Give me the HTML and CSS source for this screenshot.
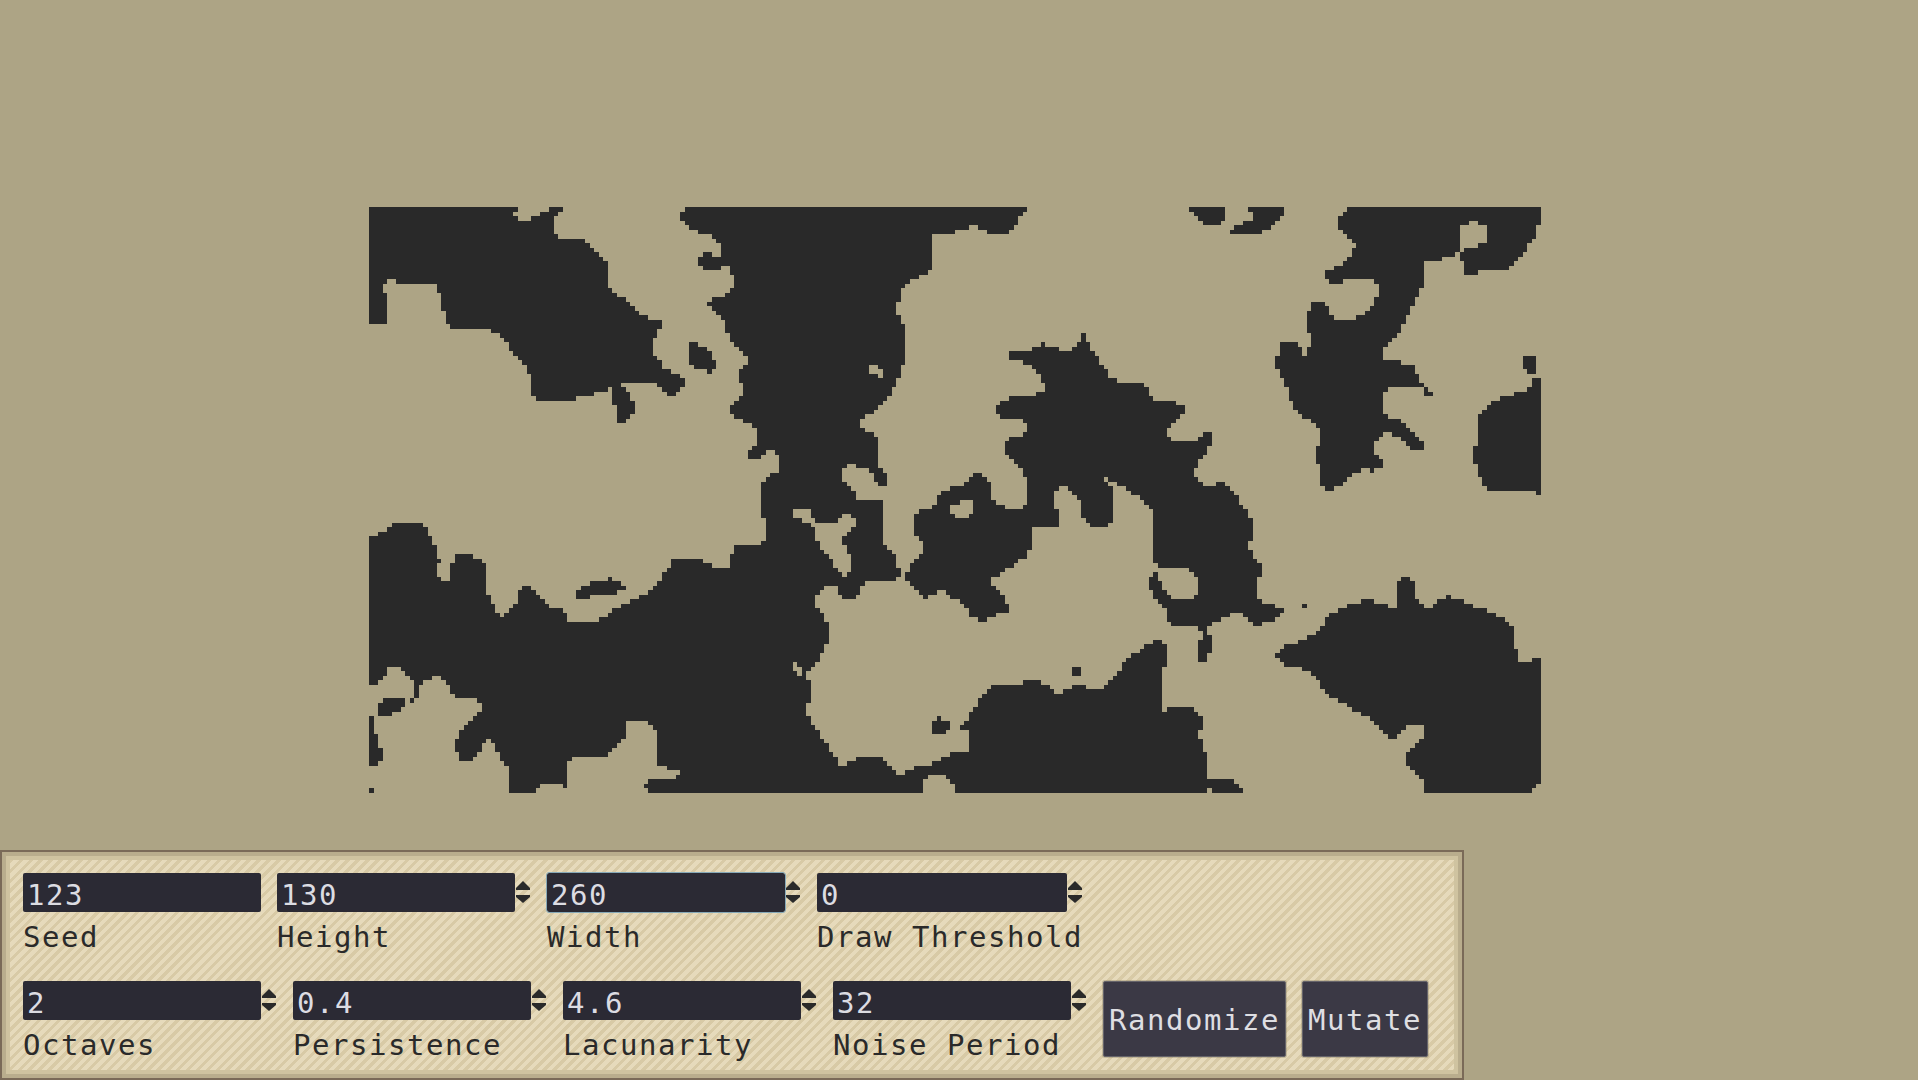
FILE: index.html
```html
<!DOCTYPE html>
<html lang="en">
<head>
<meta charset="utf-8">
<title>Noise Map</title>
<link rel="stylesheet" href="styles.css">
</head>
<body>
<main class="page">
  <canvas class="map" id="map" width="260" height="130"></canvas>
  <section class="panel">
    <div class="row">
      <div class="field plain"><div class="input-row"><div class="input">123</div></div><div class="label">Seed</div></div>
      <div class="field"><div class="input-row"><div class="input">130</div><svg class="spin" viewBox="0 0 16 39"><polygon points="8,8 15,15 15,17 1,17 1,15"/><polygon points="1,22 15,22 15,24 8,30 1,24"/></svg></div><div class="label">Height</div></div>
      <div class="field"><div class="input-row"><div class="input focus">260</div><svg class="spin" viewBox="0 0 16 39"><polygon points="8,8 15,15 15,17 1,17 1,15"/><polygon points="1,22 15,22 15,24 8,30 1,24"/></svg></div><div class="label">Width</div></div>
      <div class="field wide"><div class="input-row"><div class="input">0</div><svg class="spin" viewBox="0 0 16 39"><polygon points="8,8 15,15 15,17 1,17 1,15"/><polygon points="1,22 15,22 15,24 8,30 1,24"/></svg></div><div class="label">Draw Threshold</div></div>
    </div>
    <div class="row">
      <div class="field"><div class="input-row"><div class="input">2</div><svg class="spin" viewBox="0 0 16 39"><polygon points="8,8 15,15 15,17 1,17 1,15"/><polygon points="1,22 15,22 15,24 8,30 1,24"/></svg></div><div class="label">Octaves</div></div>
      <div class="field"><div class="input-row"><div class="input">0.4</div><svg class="spin" viewBox="0 0 16 39"><polygon points="8,8 15,15 15,17 1,17 1,15"/><polygon points="1,22 15,22 15,24 8,30 1,24"/></svg></div><div class="label">Persistence</div></div>
      <div class="field"><div class="input-row"><div class="input">4.6</div><svg class="spin" viewBox="0 0 16 39"><polygon points="8,8 15,15 15,17 1,17 1,15"/><polygon points="1,22 15,22 15,24 8,30 1,24"/></svg></div><div class="label">Lacunarity</div></div>
      <div class="field"><div class="input-row"><div class="input">32</div><svg class="spin" viewBox="0 0 16 39"><polygon points="8,8 15,15 15,17 1,17 1,15"/><polygon points="1,22 15,22 15,24 8,30 1,24"/></svg></div><div class="label">Noise Period</div></div>
      <button class="btn" type="button">Randomize</button>
      <button class="btn" type="button">Mutate</button>
    </div>
  </section>
</main>
<script src="map.js"></script>
</body>
</html>
```
FILE: styles.css
```css
* { box-sizing: border-box; }
html, body { margin: 0; height: 100%; }
body {
  background: #ada485;
  font-family: "DejaVu Sans Mono", "Liberation Mono", monospace;
  font-size: 29px;
  letter-spacing: 1.54px;
  overflow: hidden;
}
.page {
  height: 100vh;
  display: flex;
  flex-direction: column;
  align-items: flex-start;
}
.map {
  display: block;
  width: 1172px;
  height: 586px;
  margin: 207px 0 0 369px;
  image-rendering: pixelated;
}
.panel {
  margin-top: auto;
  width: 1464px;
  height: 230px;
  padding: 21px;
  border: 2px solid #7a6a58;
  background: repeating-linear-gradient(135deg, #e6dabb 0 3.8px, #d8caa6 3.8px 7px);
  box-shadow: inset 0 0 0 4px #b9ad8d, inset 0 0 0 8px #cfc3a0;
  display: flex;
  flex-direction: column;
  gap: 30px;
}
.row { display: flex; gap: 16px; height: 78px; }
.field { width: 254px; flex: none; }
.field.plain { width: 238px; }
.field.wide { width: 266px; }
.input-row { display: flex; height: 39px; }
.input {
  flex: 1;
  height: 39px;
  padding: 4px 0 0 4px;
  line-height: 37px;
  background: #2b2a34;
  color: #dcdce2;
  border-radius: 2px;
}
.input.focus { outline: 1px solid #86a9b8; }
.spin { flex: none; width: 16px; height: 39px; fill: #2a2a2a; }
.label { margin-top: 8px; height: 35px; line-height: 35px; color: #2a2a2a; white-space: nowrap; }
.btn {
  flex: none;
  height: 76px;
  padding: 2px 5px 0;
  font: inherit;
  letter-spacing: inherit;
  color: #dedee2;
  background: #3b3945;
  border: 1px solid #66646a;
  border-radius: 2px;
  box-shadow: 0 0 0 1px rgba(130, 120, 95, .35);
}
```
FILE: map.js
```js
(function () {
  var Q = {
    A: [360, 200, [
      [24,21,413,21,413,36,400,36,400,48,413,48,413,62,447,62,447,48,470,48,470,36,494,36,494,21,530,21,530,36,518,36,518,48,507,48,507,100,518,100,518,117,588,117,588,130,600,130,600,145,612,145,612,157,625,157,625,170,635,170,635,183,648,183,648,264,660,264,660,278,672,278,672,291,695,291,695,306,707,306,707,320,718,320,718,333,730,333,730,346,753,346,753,360,789,360,789,387,777,387,777,414,766,414,766,467,777,467,777,480,789,480,789,507,813,507,813,521,836,521,836,534,847,534,847,561,836,561,836,575,823,575,823,588,800,588,800,575,789,575,789,561,777,561,777,548,683,548,683,561,648,561,648,575,612,575,612,588,564,588,564,602,460,602,460,588,447,588,447,521,436,521,436,494,424,494,424,480,413,480,413,467,400,467,400,453,389,453,389,427,377,427,377,414,366,414,366,400,342,400,342,387,235,387,235,373,224,373,224,333,212,333,212,278,201,278,201,251,94,251,94,238,71,238,71,251,58,251,58,278,71,278,71,372,24,372],
      [859,427,883,427,883,440,907,440,907,453,918,453,918,480,930,480,930,507,918,507,918,521,907,521,907,507,870,507,870,494,859,494],
      [660,561,695,561,695,575,707,575,707,602,718,602,718,640,707,640,707,655,695,655,695,668,672,668,672,615,660,615],
      [847,21,1568,21,1568,90,1555,90,1555,102,1495,102,1495,210,1484,210,1484,225,1460,225,1460,238,1437,238,1437,252,1425,252,1425,264,1414,264,1414,306,1402,306,1402,346,1414,346,1414,372,1425,372,1425,494,1414,494,1414,534,1402,534,1402,561,1390,561,1390,588,1378,588,1378,602,1366,602,1366,615,1354,615,1354,629,1342,629,1342,642,1320,642,1320,655,1308,655,1308,683,1320,683,1320,695,1342,695,1342,710,1354,710,1354,804,1366,804,1366,818,1378,818,1378,858,1354,858,1354,845,1342,845,1342,818,1330,818,1330,804,1296,804,1296,792,1272,792,1272,804,1260,804,1260,845,1272,845,1272,858,1284,858,1284,872,1296,872,1296,901,1048,901,1048,845,1060,845,1060,832,1072,832,1072,818,1095,818,1095,765,1084,765,1084,750,1060,750,1060,765,1048,765,1048,777,1014,777,1014,750,1025,750,1025,738,1037,738,1037,683,1025,683,1025,669,1002,669,1002,655,977,655,977,642,965,642,965,615,977,615,977,602,990,602,990,588,1002,588,1002,548,990,548,990,507,1002,507,1002,494,1014,494,1014,467,1002,467,1002,453,990,453,990,440,977,440,977,427,965,427,965,400,954,400,954,360,942,360,942,346,930,346,930,333,918,333,918,320,907,320,907,306,918,306,918,291,954,291,954,278,965,278,965,264,977,264,977,225,965,225,965,198,942,198,942,210,895,210,895,198,883,198,883,170,895,170,895,157,918,157,918,170,942,170,942,130,930,130,930,117,918,117,918,102,883,102,883,90,860,90,860,75,847,75,847,62,836,62,836,36,847,36],
      [1508,901,1508,885,1520,885,1520,872,1542,872,1542,858,1568,858,1568,901]
    ], [
      [1330,494,1354,494,1354,507,1366,507,1366,534,1354,534,1354,521,1330,521]
    ]],
    B: [960, 200, [
      [0,21,175,21,175,36,163,36,163,48,152,48,152,75,140,75,140,88,128,88,128,102,70,102,70,88,45,88,45,75,21,75,21,88,0,88],
      [598,21,693,21,693,62,683,62,683,75,636,75,636,62,623,62,623,48,610,48,610,36,598,36],
      [753,21,847,21,847,48,835,48,835,62,823,62,823,75,810,75,810,88,787,88,787,102,706,102,706,88,717,88,717,75,740,75,740,62,763,62,763,36,753,36],
      [1012,21,1518,21,1518,75,1506,75,1506,117,1495,117,1495,130,1483,130,1483,157,1471,157,1471,170,1459,170,1459,183,1448,183,1448,198,1436,198,1436,210,1354,210,1354,225,1318,225,1318,183,1306,183,1306,157,1318,157,1318,145,1354,145,1354,130,1378,130,1378,75,1354,75,1354,62,1330,62,1330,75,1307,75,1307,157,1295,157,1295,170,1260,170,1260,183,1213,183,1213,264,1201,264,1201,291,1190,291,1190,318,1178,318,1178,345,1166,345,1166,372,1153,372,1153,400,1142,400,1142,414,1130,414,1130,427,1118,427,1118,440,1106,440,1106,480,1153,480,1153,494,1189,494,1189,521,1201,521,1201,548,1213,548,1213,561,1224,561,1224,575,1236,575,1236,588,1213,588,1213,561,1118,561,1118,575,1106,575,1106,642,1118,642,1118,656,1153,656,1153,669,1166,669,1166,683,1178,683,1178,696,1190,696,1190,710,1201,710,1201,723,1213,723,1213,750,1178,750,1178,737,1166,737,1166,723,1153,723,1153,710,1130,710,1130,696,1106,696,1106,710,1095,710,1095,723,1083,723,1083,765,1095,765,1095,777,1106,777,1106,804,1083,804,1083,818,1071,818,1071,804,1045,804,1045,818,1023,818,1023,832,1011,832,1011,845,998,845,998,858,975,858,975,872,952,872,952,858,941,858,941,792,929,792,929,738,941,738,941,683,929,683,929,669,917,669,917,656,894,656,894,642,882,642,882,629,870,629,870,602,858,602,858,561,847,561,847,534,835,534,835,507,823,507,823,467,835,467,835,427,882,427,882,440,894,440,894,467,905,467,905,440,917,440,917,400,905,400,905,333,917,333,917,306,952,306,952,318,964,318,964,345,975,345,975,360,1035,360,1035,345,1058,345,1058,333,1071,333,1071,318,1083,318,1083,291,1093,291,1093,251,1083,251,1083,238,998,238,998,251,964,251,964,238,952,238,952,210,975,210,975,198,998,198,998,183,1012,183,1012,170,1023,170,1023,143,1035,143,1035,130,1023,130,1023,117,1012,117,1012,102,998,102,998,90,988,90,988,48,998,48,998,36,1012,36],
      [128,453,186,453,186,440,210,440,210,427,222,427,222,440,256,440,256,453,293,453,293,440,305,440,305,427,316,427,316,400,329,400,329,427,340,427,340,453,352,453,352,467,363,467,363,494,375,494,375,507,387,507,387,534,410,534,410,548,482,548,482,561,494,561,494,588,505,588,505,602,564,602,564,615,588,615,588,642,575,642,575,656,564,656,564,669,552,669,552,683,541,683,541,710,552,710,552,723,622,723,622,710,635,710,635,696,659,696,659,737,646,737,646,765,635,765,635,777,622,777,622,804,612,804,612,832,622,832,622,845,635,845,635,858,669,858,669,845,693,845,693,858,705,858,705,872,717,872,717,885,729,885,729,901,470,901,470,885,446,885,446,872,435,872,435,858,410,858,410,845,387,845,387,832,375,832,375,845,387,845,387,858,400,858,400,901,305,901,305,885,293,885,293,872,282,872,282,858,258,858,258,872,246,872,246,901,175,901,175,832,163,832,163,804,152,804,152,792,140,792,140,777,128,777,128,765,116,765,116,723,128,723,128,710,163,710,163,696,175,696,175,669,163,669,163,656,105,656,105,642,92,642,92,615,105,615,105,602,128,602,128,588,198,588,198,575,222,575,222,548,210,548,210,521,198,521,198,507,186,507,186,494,163,494,163,480,128,480],
      [0,858,10,858,10,845,22,845,22,832,33,832,33,818,57,818,57,832,70,832,70,845,81,845,81,901,0,901],
      [1471,467,1505,467,1505,521,1483,521,1483,507,1471,507],
      [1495,534,1518,534,1518,885,1506,885,1506,872,1378,872,1378,858,1366,858,1366,832,1354,832,1354,792,1342,792,1342,738,1354,738,1354,642,1366,642,1366,629,1378,629,1378,615,1389,615,1389,602,1412,602,1412,588,1448,588,1448,575,1483,575,1483,561,1495,561]
    ], []],
    C: [360, 500, [
      [1048,0,1366,0,1366,135,1378,135,1378,150,1390,150,1390,163,1402,163,1402,203,1414,203,1414,230,1402,230,1402,243,1320,243,1320,258,1308,258,1308,285,1296,285,1296,297,1262,297,1262,285,1250,285,1250,258,1214,258,1214,270,1202,270,1202,285,1190,285,1190,325,1202,325,1202,338,1214,338,1214,365,1226,365,1226,432,1214,432,1214,458,1202,458,1202,487,1190,487,1190,500,1178,500,1178,513,1167,513,1167,540,1179,540,1179,608,1167,608,1167,648,1179,648,1179,675,1190,675,1190,690,1202,690,1202,716,1214,716,1214,730,1226,730,1226,757,1238,757,1238,770,1250,770,1250,797,1273,797,1273,784,1296,784,1296,771,1366,771,1366,784,1378,784,1378,797,1390,797,1390,811,1402,811,1402,824,1425,824,1425,811,1448,811,1448,797,1495,797,1495,784,1518,784,1518,771,1542,771,1542,757,1568,757,1568,879,1555,879,1555,852,1530,838,1530,825,1495,825,1484,838,1472,852,1472,879,753,879,753,865,742,865,742,852,753,852,753,838,823,838,823,824,836,824,836,811,800,811,800,797,777,797,777,690,765,690,765,676,753,676,753,662,695,662,695,716,683,716,683,730,672,730,672,744,660,744,660,757,648,757,648,771,555,771,555,784,541,784,541,865,530,865,530,852,470,852,470,865,460,865,460,879,389,879,389,797,377,797,377,784,366,784,366,757,354,757,354,730,342,730,342,716,330,716,330,730,319,730,319,757,307,757,307,770,295,770,295,784,259,784,259,757,248,757,248,716,260,716,260,690,272,690,272,676,284,676,284,662,296,662,296,648,308,648,308,635,319,635,319,608,307,608,307,594,248,594,248,581,236,581,236,554,225,554,225,541,212,541,212,528,188,528,188,541,165,541,165,554,153,554,153,594,142,594,142,541,130,541,130,528,118,528,118,514,106,514,106,501,71,501,71,528,59,528,59,541,47,541,47,554,24,554,24,108,47,108,47,95,71,95,71,81,82,81,82,66,165,66,165,81,178,81,178,108,189,108,189,135,201,135,201,176,212,176,212,189,201,189,201,230,212,230,212,243,236,243,236,189,248,189,248,162,296,162,296,176,319,176,319,189,330,189,330,284,342,284,342,311,354,311,354,338,366,338,366,352,378,352,378,338,389,338,389,324,401,324,401,311,413,311,413,270,424,270,424,257,448,257,448,270,460,270,460,284,472,284,472,297,484,297,484,311,495,311,495,324,530,324,530,338,542,338,542,365,625,365,625,352,648,352,648,338,660,338,660,324,683,324,683,311,707,311,707,297,730,297,730,284,753,284,753,270,766,270,766,257,777,257,777,243,789,243,789,216,801,216,801,203,813,203,813,176,895,176,895,189,918,189,918,203,965,203,965,162,977,162,977,135,1048,135,1048,122,1060,122,1060,54,1048,54],
      [565,270,578,270,578,257,601,257,601,243,648,243,648,230,660,230,660,243,683,243,683,257,695,257,695,270,672,270,672,284,601,284,601,297,565,297],
      [59,594,118,594,118,621,106,621,106,635,82,635,82,648,47,648,47,608,59,608],
      [128,594,142,594,142,608,128,608],
      [24,648,35,648,35,702,47,702,47,744,59,744,59,784,47,784,47,797,24,797],
      [24,865,35,865,35,879,24,879],
      [1508,0,1569,0,1569,12,1545,12,1545,40,1555,52,1569,52,1569,310,1555,297,1542,284,1518,270,1495,284,1472,297,1472,284,1460,270,1448,257,1437,243,1425,230,1425,216,1437,216,1437,189,1448,189,1460,176,1472,162,1472,122,1460,108,1448,108,1448,54,1460,40,1472,27,1495,27,1495,12,1508,12],
      [1495,662,1507,662,1507,648,1519,648,1519,662,1542,662,1542,690,1530,690,1530,702,1495,702]
    ], [
      [1132,27,1179,27,1179,54,1190,66,1250,66,1250,54,1262,40,1284,40,1284,54,1296,54,1296,81,1284,81,1284,95,1272,95,1272,108,1260,108,1260,135,1272,135,1272,162,1284,162,1284,216,1272,216,1272,230,1260,230,1260,216,1250,216,1250,203,1238,203,1238,176,1226,176,1226,162,1214,162,1214,150,1202,150,1202,122,1190,122,1190,81,1179,81,1179,68,1156,68,1156,54,1132,54],
      [1132,487,1142,487,1142,500,1155,500,1155,528,1142,528,1142,514,1132,514]
    ]],
    D: [960, 500, [
      [33,0,91,0,91,12,115,12,115,27,163,27,163,12,175,12,175,0,246,0,246,27,256,27,256,80,186,80,186,150,175,150,175,176,152,176,152,190,140,190,140,203,115,203,115,216,105,216,105,230,81,230,81,258,92,258,92,270,105,270,105,284,115,284,115,312,128,312,128,338,92,338,92,352,68,352,68,365,45,365,45,352,21,352,21,325,10,325,10,312,0,312,0,52,21,52,21,40,33,40],
      [316,0,400,0,400,66,387,66,387,80,340,80,340,66,328,66,328,54,316,54],
      [482,0,729,0,729,12,741,12,741,27,753,27,753,54,763,54,763,122,753,122,753,150,763,150,763,176,775,176,775,190,787,190,787,230,775,230,775,297,787,297,787,312,823,312,823,325,847,325,847,338,835,338,835,352,823,352,823,365,787,365,787,378,763,378,763,365,753,365,753,352,741,352,741,338,706,338,706,352,683,352,683,365,659,365,659,378,646,378,646,405,659,405,659,458,646,458,646,485,623,485,623,420,635,420,635,392,623,392,623,378,552,378,552,365,541,365,541,325,529,325,529,312,517,312,517,297,505,297,505,270,494,270,494,230,505,230,505,216,517,216,517,243,529,243,529,270,541,270,541,284,552,284,552,297,612,297,612,284,622,284,622,230,612,230,612,216,598,216,598,203,517,203,517,190,505,190,505,27,494,27,494,12,482,12],
      [893,312,903,312,903,325,893,325],
      [293,501,316,501,316,528,293,528],
      [1142,243,1153,243,1153,230,1177,230,1177,243,1189,243,1189,297,1201,297,1201,312,1213,312,1213,325,1236,325,1236,312,1248,312,1248,297,1270,297,1270,285,1283,285,1283,297,1318,297,1318,312,1342,312,1342,325,1377,325,1377,338,1400,338,1400,352,1425,352,1425,365,1436,365,1436,378,1448,378,1448,445,1459,445,1459,485,1495,485,1495,473,1518,473,1518,852,1506,852,1506,865,1495,865,1495,879,1213,879,1213,838,1201,838,1201,825,1189,825,1189,811,1177,811,1177,797,1166,797,1166,757,1177,757,1177,743,1189,743,1189,730,1201,730,1201,716,1213,716,1213,676,1166,676,1166,690,1153,690,1153,703,1142,703,1142,716,1118,716,1118,703,1106,703,1106,690,1094,690,1094,676,1082,676,1082,662,1070,662,1070,649,1046,649,1046,635,1023,635,1023,622,1011,622,1011,608,988,608,988,595,964,595,964,581,952,581,952,568,941,568,941,541,929,541,929,527,917,527,917,514,894,514,894,500,847,500,847,487,835,487,835,473,823,473,823,460,835,460,835,446,847,446,847,433,882,433,882,420,905,420,905,406,929,406,929,392,941,392,941,378,952,378,952,352,964,352,964,338,988,338,988,325,1011,325,1011,312,1046,312,1046,297,1082,297,1082,312,1118,312,1118,325,1142,325],
      [0,675,10,675,10,662,22,662,22,635,34,635,34,622,46,622,46,595,58,595,58,581,70,581,70,568,82,568,82,555,163,555,163,541,210,541,210,555,233,555,233,568,246,568,246,581,270,581,270,568,293,568,293,555,328,555,328,568,376,568,376,555,388,555,388,541,400,541,400,527,411,527,411,514,423,514,423,487,435,487,435,473,447,473,447,460,470,460,470,446,482,446,482,433,505,433,505,420,528,420,528,433,541,433,541,500,528,500,528,635,541,635,541,622,612,622,612,635,623,635,623,649,635,649,635,690,623,690,623,716,635,716,635,757,646,757,646,838,717,838,717,852,729,852,729,865,741,865,741,879,659,879,659,865,646,865,646,879,0,879,0,755,21,755,21,690,0,690]
    ], []]
  };
  var SX = 1568 / 600, CELL = 1172 / 260, LEFT = 369, TOP = 207;
  var canvas = document.getElementById('map');
  var ctx = canvas.getContext('2d', { willReadFrequently: true });

  function trace(p) {
    ctx.beginPath();
    ctx.moveTo(p[0], p[1]);
    for (var i = 2; i < p.length; i += 2) ctx.lineTo(p[i], p[i + 1]);
    ctx.closePath();
    ctx.fill();
  }
  Object.keys(Q).forEach(function (k) {
    var q = Q[k];
    var sx = 1 / SX / CELL, sy = 1 / 3 / CELL;
    ctx.setTransform(sx, 0, 0, sy, (q[0] - LEFT) / CELL, (q[1] - TOP) / CELL);
    ctx.globalCompositeOperation = 'source-over';
    ctx.fillStyle = '#000';
    q[2].forEach(trace);
    ctx.globalCompositeOperation = 'destination-out';
    q[3].forEach(trace);
  });
  ctx.setTransform(1, 0, 0, 1, 0, 0);
  ctx.globalCompositeOperation = 'source-over';
  var img = ctx.getImageData(0, 0, 260, 130), d = img.data;
  for (var i = 0; i < d.length; i += 4) {
    var on = d[i + 3] >= 128;
    d[i] = d[i + 1] = d[i + 2] = 41;
    d[i + 3] = on ? 255 : 0;
  }
  ctx.putImageData(img, 0, 0);
})();
```
